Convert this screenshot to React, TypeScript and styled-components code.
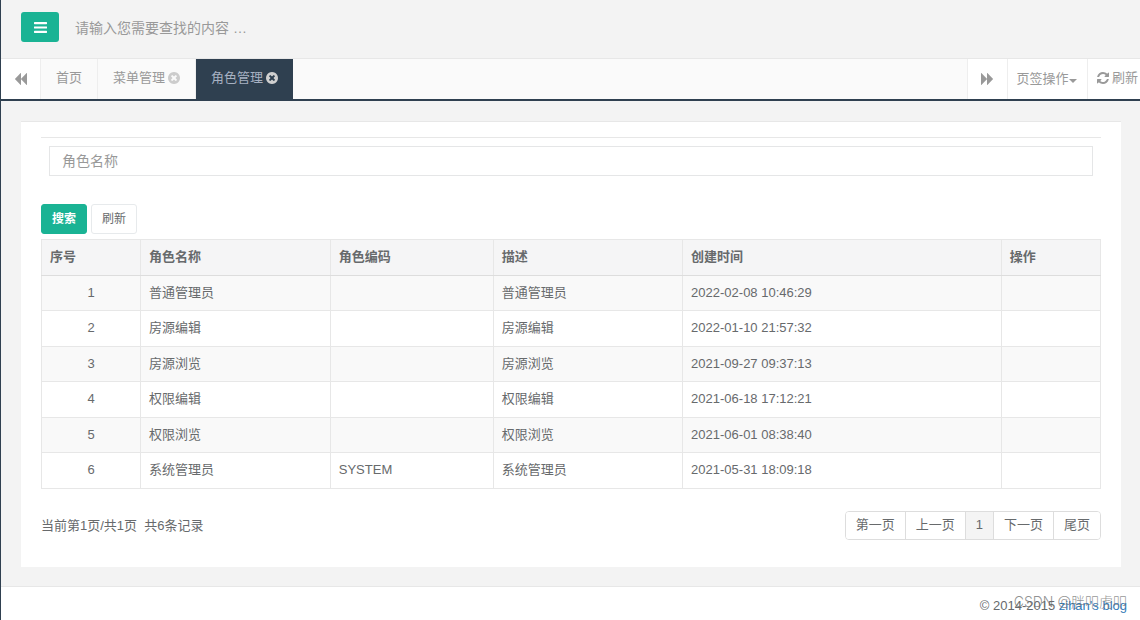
import React from "react";
import styled, { createGlobalStyle } from "styled-components";

const ink = "#676a6c";
const line = "#e7e7e7";
const navy = "#2f4050";
const green = "#1ab394";

const GlobalStyle = createGlobalStyle`
  *, *::before, *::after { box-sizing: border-box; }
  body {
    margin: 0;
    background: #ffffff;
    color: ${ink};
    font-family: "Liberation Sans", "Noto Sans CJK SC", sans-serif;
    font-size: 13px;
    line-height: 18px;
  }
  button, input { font: inherit; color: inherit; margin: 0; }
`;

const Page = styled.div`
  position: relative;
  display: flex;
  flex-direction: column;
  min-height: 100vh;
  overflow: hidden;
  border-left: 1px solid ${navy};
  background: #f3f3f3;
`;

const Header = styled.header`
  display: flex;
  align-items: center;
  gap: 16px;
  height: 59px;
  padding: 0 20px 4px;
  border-bottom: 1px solid ${line};
`;

const MenuButton = styled.button`
  display: flex;
  align-items: center;
  justify-content: center;
  width: 38px;
  height: 30px;
  padding: 0;
  border: 0;
  border-radius: 3px;
  background: ${green};
  color: #ffffff;
`;

const TopSearch = styled.input`
  flex: 1;
  min-width: 0;
  height: 32px;
  padding: 2px 0 0;
  border: 0;
  outline: 0;
  background: transparent;
  font-size: 14px;
  &::placeholder { color: #999999; opacity: 1; }
`;

const TabBar = styled.nav`
  display: flex;
  height: 42px;
  border-bottom: 2px solid ${navy};
  background: #fafafa;
  color: #999999;
`;

const BarButton = styled.button<{ $side: "left" | "right"; $width: number }>`
  display: flex;
  align-items: center;
  justify-content: center;
  flex: none;
  width: ${(p) => p.$width}px;
  padding: 0;
  border: 0 solid #eeeeee;
  border-${(p) => (p.$side === "left" ? "right" : "left")}-width: 1px;
  padding-right: ${(p) => (p.$side === "left" ? 0 : 2)}px;
  background: #ffffff;
  white-space: nowrap;
`;

const RefreshButton = styled(BarButton)`
  justify-content: flex-start;
  gap: 3px;
  padding: 0 0 2px 9px;
`;

const Tabs = styled.div`
  display: flex;
  flex: 1;
  min-width: 0;
  overflow: hidden;
`;

const Tab = styled.a<{ $active?: boolean }>`
  display: flex;
  align-items: center;
  gap: 3px;
  padding: 0 15px 2px;
  border-right: ${(p) => (p.$active ? "0" : "1px")} solid #eeeeee;
  background: ${(p) => (p.$active ? navy : "transparent")};
  color: ${(p) => (p.$active ? "#a7b1c2" : "#999999")};
  text-decoration: none;
  white-space: nowrap;
  svg { color: ${(p) => (p.$active ? "#d0d0d0" : "#cccccc")}; }
`;

const Caret = styled.span`
  border: 4px solid transparent;
  border-top-color: currentColor;
  border-bottom-width: 0;
  margin-top: 3px;
`;

const Content = styled.main`
  flex: 1;
  padding: 20px 19px 19px 20px;
`;

const Card = styled.section`
  padding: 15px 20px 27px;
  border-top: 1px solid ${line};
  background: #ffffff;
`;

const Filter = styled.form`
  padding: 8px 8px 28px;
  border-top: 1px solid ${line};
`;

const FilterInput = styled.input`
  display: block;
  width: 100%;
  height: 30px;
  padding: 0 12px;
  border: 1px solid #e5e6e7;
  background: #ffffff;
  font-size: 14px;
  &::placeholder { color: #999999; opacity: 1; }
`;

const Actions = styled.div`
  display: flex;
  gap: 4px;
  margin-bottom: 5px;
`;

const ActionButton = styled.button<{ $primary?: boolean }>`
  width: 46px;
  height: 30px;
  padding: 0;
  border: 1px solid ${(p) => (p.$primary ? green : "#e7eaec")};
  border-radius: 3px;
  background: ${(p) => (p.$primary ? green : "#ffffff")};
  color: ${(p) => (p.$primary ? "#ffffff" : ink)};
  font-size: 12px;
  font-weight: ${(p) => (p.$primary ? 700 : 400)};
`;

const Table = styled.table`
  width: 100%;
  table-layout: fixed;
  border-collapse: collapse;
  th, td {
    height: 36px;
    padding: 0 8px 2px;
    border: 1px solid ${line};
    text-align: left;
  }
  th {
    border-bottom-color: #dddddd;
    background: #f5f5f6;
    font-weight: 700;
  }
  tbody tr:nth-child(odd) td {
    height: 35px;
    padding-bottom: 0;
    background: #f9f9f9;
  }
  td:first-child { text-align: center; }
`;

const Column = styled.col<{ $width: string }>`
  width: ${(p) => p.$width};
`;

const TableFoot = styled.div`
  display: flex;
  align-items: center;
  justify-content: space-between;
  margin-top: 22px;
`;

const Summary = styled.p`
  margin: 0;
`;

const Pager = styled.nav`
  display: flex;
  overflow: hidden;
  border: 1px solid #dddddd;
  border-radius: 4px;
`;

const PageButton = styled.button<{ $current?: boolean }>`
  height: 27px;
  padding: 0 10px 2px;
  border: 0;
  background: ${(p) => (p.$current ? "#f4f4f4" : "#ffffff")};
  & + & { border-left: 1px solid #dddddd; }
`;

const Footer = styled.footer`
  display: flex;
  justify-content: flex-end;
  padding: 10px 13px 5px;
  border-top: 1px solid ${line};
  background: #ffffff;
  white-space: pre;
  a { color: #337ab7; text-decoration: none; }
`;

const Watermark = styled.span`
  position: absolute;
  right: 13px;
  bottom: 9px;
  color: rgba(110, 110, 110, 0.75);
  font-family: Inter, "Noto Sans CJK SC", sans-serif;
  font-size: 14px;
  font-weight: 300;
  pointer-events: none;
`;

const icons = {
  bars: "M1664 1344v128q0 26-19 45t-45 19h-1408q-26 0-45-19t-19-45v-128q0-26 19-45t45-19h1408q26 0 45 19t19 45zm0-512v128q0 26-19 45t-45 19h-1408q-26 0-45-19t-19-45v-128q0-26 19-45t45-19h1408q26 0 45 19t19 45zm0-512v128q0 26-19 45t-45 19h-1408q-26 0-45-19t-19-45v-128q0-26 19-45t45-19h1408q26 0 45 19t19 45z",
  backward:
    "M1619 141q19-19 32-13t13 32v1472q0 26-13 32t-32-13l-710-710q-9-9-13-19v710q0 26-13 32t-32-13l-710-710q-19-19-19-45t19-45l710-710q19-19 32-13t13 32v710q4-10 13-19z",
  forward:
    "M173 1651q-19 19-32 13t-13-32v-1472q0-26 13-32t32 13l710 710q9 9 13 19v-710q0-26 13-32t32 13l710 710q19 19 19 45t-19 45l-710 710q-19 19-32 13t-13-32v-710q-4 10-13 19z",
  close:
    "M1277 1122q0-26-19-45l-181-181 181-181q19-19 19-45 0-27-19-46l-90-90q-19-19-46-19-26 0-45 19l-181 181-181-181q-19-19-45-19-27 0-46 19l-90 90q-19 19-19 46 0 26 19 45l181 181-181 181q-19 19-19 45 0 27 19 46l90 90q19 19 46 19 26 0 45-19l181-181 181 181q19 19 45 19 27 0 46-19l90-90q19-19 19-46zm387-226q0 209-103 385.5t-279.5 279.5-385.5 103-385.5-103-279.5-279.5-103-385.5 103-385.5 279.5-279.5 385.5-103 385.5 103 279.5 279.5 103 385.5z",
  refresh:
    "M1639 1056q0 5-1 7-64 268-268 434.5t-478 166.5q-146 0-282.5-55t-243.5-157l-129 129q-19 19-45 19t-45-19-19-45v-448q0-26 19-45t45-19h448q26 0 45 19t19 45-19 45l-137 137q71 66 161 102t187 36q134 0 250-65t186-179q11-17 53-117 8-23 30-23h192q13 0 22.5 9.5t9.5 22.5zm25-800v448q0 26-19 45t-45 19h-448q-26 0-45-19t-19-45 19-45l138-138q-148-137-349-137-134 0-250 65t-186 179q-11 17-53 117-8 23-30 23h-199q-13 0-22.5-9.5t-9.5-22.5v-7q65-268 270-434.5t480-166.5q146 0 284 55.5t245 156.5l130-129q19-19 45-19t45 19 19 45z",
};

function Icon({ name, size = 12 }: { name: keyof typeof icons; size?: number }) {
  return (
    <svg width={size} height={size} viewBox="128 128 1536 1536" fill="currentColor" aria-hidden="true">
      <path d={icons[name]} />
    </svg>
  );
}

const columns = [
  { title: "序号", width: "9.35%" },
  { title: "角色名称", width: "17.92%" },
  { title: "角色编码", width: "15.38%" },
  { title: "描述", width: "17.89%" },
  { title: "创建时间", width: "30.1%" },
  { title: "操作", width: "9.36%" },
];

const roles = [
  { name: "普通管理员", code: "", created: "2022-02-08 10:46:29" },
  { name: "房源编辑", code: "", created: "2022-01-10 21:57:32" },
  { name: "房源浏览", code: "", created: "2021-09-27 09:37:13" },
  { name: "权限编辑", code: "", created: "2021-06-18 17:12:21" },
  { name: "权限浏览", code: "", created: "2021-06-01 08:38:40" },
  { name: "系统管理员", code: "SYSTEM", created: "2021-05-31 18:09:18" },
];

const pages = ["第一页", "上一页", "1", "下一页", "尾页"];

export default function App() {
  return (
    <>
      <GlobalStyle />
      <Page>
        <Header>
          <MenuButton type="button" aria-label="菜单">
            <Icon name="bars" size={13} />
          </MenuButton>
          <TopSearch type="text" aria-label="查找" placeholder="请输入您需要查找的内容 …" />
        </Header>
        <TabBar>
          <BarButton type="button" $side="left" $width={40} aria-label="向左">
            <Icon name="backward" />
          </BarButton>
          <Tabs>
            <Tab href="#home">首页</Tab>
            <Tab href="#menus">
              菜单管理 <Icon name="close" />
            </Tab>
            <Tab href="#roles" $active>
              角色管理 <Icon name="close" />
            </Tab>
          </Tabs>
          <BarButton type="button" $side="right" $width={40} aria-label="向右">
            <Icon name="forward" />
          </BarButton>
          <BarButton type="button" $side="right" $width={80}>
            页签操作
            <Caret />
          </BarButton>
          <RefreshButton type="button" $side="right" $width={53}>
            <Icon name="refresh" />
            刷新
          </RefreshButton>
        </TabBar>
        <Content>
          <Card>
            <Filter>
              <FilterInput type="text" aria-label="角色名称" placeholder="角色名称" />
            </Filter>
            <Actions>
              <ActionButton type="button" $primary>搜索</ActionButton>
              <ActionButton type="button">刷新</ActionButton>
            </Actions>
            <Table>
              <colgroup>
                {columns.map((c) => (
                  <Column key={c.title} $width={c.width} />
                ))}
              </colgroup>
              <thead>
                <tr>
                  {columns.map((c) => (
                    <th key={c.title} scope="col">{c.title}</th>
                  ))}
                </tr>
              </thead>
              <tbody>
                {roles.map((r, i) => (
                  <tr key={r.name}>
                    <td>{i + 1}</td>
                    <td>{r.name}</td>
                    <td>{r.code}</td>
                    <td>{r.name}</td>
                    <td>{r.created}</td>
                    <td />
                  </tr>
                ))}
              </tbody>
            </Table>
            <TableFoot>
              <Summary>当前第1页/共1页&nbsp; 共6条记录</Summary>
              <Pager aria-label="分页">
                {pages.map((p) => (
                  <PageButton key={p} type="button" $current={p === "1"}>{p}</PageButton>
                ))}
              </Pager>
            </TableFoot>
          </Card>
        </Content>
        <Footer>
          © 2014-2015 <a href="#blog">zihan's blog</a>
        </Footer>
        <Watermark>CSDN @胖叩虎叩</Watermark>
      </Page>
    </>
  );
}
